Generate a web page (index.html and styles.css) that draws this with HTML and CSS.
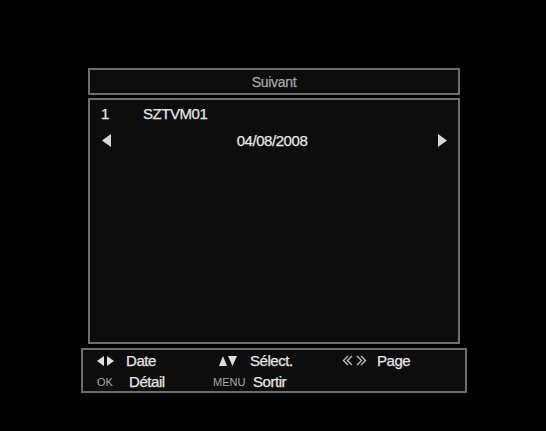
FILE: index.html
```html
<!DOCTYPE html>
<html lang="fr">
<head>
<meta charset="utf-8">
<title>Suivant</title>
<link rel="stylesheet" href="styles.css">
</head>
<body>
<div class="screen">
  <div class="title">Suivant</div>
  <div class="list">
    <div class="row">
      <span class="idx">1</span>
      <span class="name">SZTVM01</span>
    </div>
    <div class="row date-row">
      <svg class="arrow" width="9" height="13" viewBox="0 0 9 13"><polygon points="9,0 9,13 0,6.5" fill="#d8d8d8"/></svg>
      <span class="date">04/08/2008</span>
      <svg class="arrow" width="9" height="13" viewBox="0 0 9 13"><polygon points="0,0 0,13 9,6.5" fill="#d8d8d8"/></svg>
    </div>
  </div>
  <div class="help">
    <div class="hrow">
      <span class="key k1">
        <svg width="17" height="10" viewBox="0 0 17 10"><polygon points="7,0 7,10 0,5" fill="#ddd"/><polygon points="10,0 10,10 17,5" fill="#ddd"/></svg>
      </span>
      <span class="lbl l1">Date</span>
      <span class="key k2">
        <svg width="18" height="10" viewBox="0 0 18 10"><polygon points="0,10 8,10 4,0" fill="#ddd"/><polygon points="9,0 18,0 13.5,10" fill="#ddd"/></svg>
      </span>
      <span class="lbl l2">Sélect.</span>
      <span class="key k3">
        <svg width="25" height="11" viewBox="0 0 25 11" fill="none" stroke="#bbb" stroke-width="1.4"><polyline points="6,1 1.5,5.5 6,10"/><polyline points="10,1 5.5,5.5 10,10"/><polyline points="15,1 19.5,5.5 15,10"/><polyline points="19,1 23.5,5.5 19,10"/></svg>
      </span>
      <span class="lbl">Page</span>
    </div>
    <div class="hrow">
      <span class="key small k4">OK</span>
      <span class="lbl l4">Détail</span>
      <span class="key small k5">MENU</span>
      <span class="lbl">Sortir</span>
    </div>
  </div>
</div>
</body>
</html>
```

FILE: styles.css
```css
html, body {
  margin: 0;
  padding: 0;
  background: #000;
}
body {
  width: 546px;
  height: 431px;
  overflow: hidden;
  font-family: "Liberation Sans", Arial, sans-serif;
  color: #e6e6e6;
  font-size: 15px;
  letter-spacing: -0.45px;
  -webkit-text-stroke: 0.25px currentColor;
}
.screen {
  padding-top: 68px;
  display: flex;
  flex-direction: column;
  align-items: flex-start;
}
.title {
  box-sizing: border-box;
  margin-left: 88px;
  width: 372px;
  height: 27px;
  border: 2px solid #6e6e6e;
  background: #0d0d0d;
  color: #a6a6a6;
  font-size: 14px;
  letter-spacing: -0.3px;
  display: flex;
  align-items: center;
  justify-content: center;
}
.list {
  box-sizing: border-box;
  margin-top: 3px;
  margin-left: 88px;
  width: 372px;
  height: 246px;
  border: 2px solid #6e6e6e;
  background: #0d0d0d;
}
.row {
  height: 27px;
  display: flex;
  align-items: center;
  padding: 0 11px;
}
.idx {
  width: 42px;
}
.date-row {
  padding: 0 11px 0 12px;
  justify-content: space-between;
}
.date {
  flex: 1;
  text-align: center;
  padding-right: 5px;
}
.arrow {
  display: block;
}
.help {
  box-sizing: border-box;
  margin-top: 4px;
  margin-left: 81px;
  width: 386px;
  height: 45px;
  border: 2px solid #6e6e6e;
  background: #0d0d0d;
  padding-left: 14px;
}
.hrow {
  height: 21px;
  display: flex;
  align-items: center;
}
.key {
  display: flex;
  align-items: center;
}
.key svg {
  display: block;
}
.small {
  font-size: 11px;
  letter-spacing: 0;
  color: #a8a8a8;
  -webkit-text-stroke: 0;
}
.k1 { width: 29px; }
.l1 { width: 93px; }
.k2 { width: 31px; }
.l2 { width: 92px; }
.k3 { width: 35px; }
.k4 { width: 32px; }
.l4 { width: 84px; }
.k5 { width: 40px; }
```
